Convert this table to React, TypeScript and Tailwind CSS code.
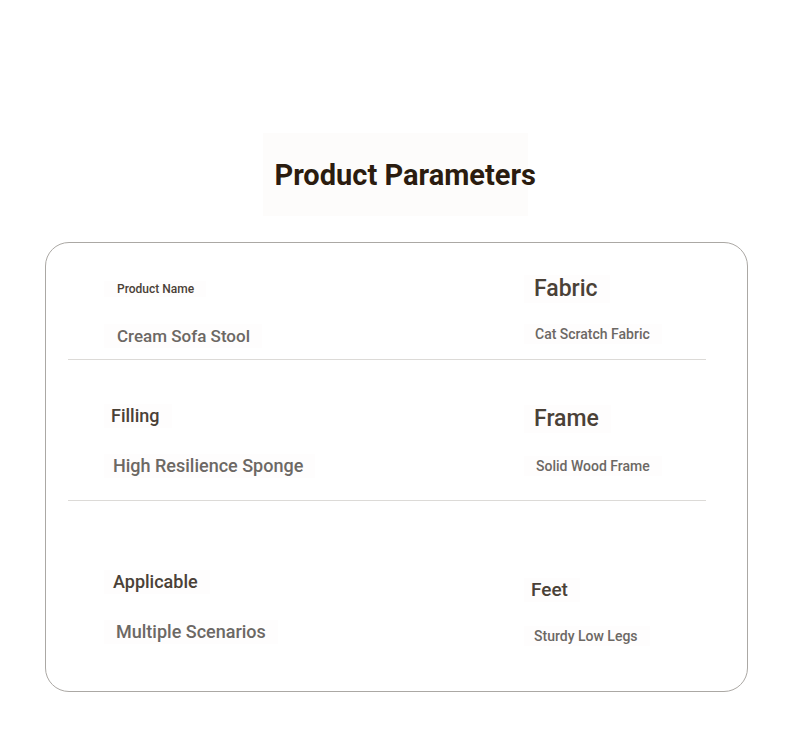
const rows = [
  {
    height: "h-[116px]",
    left: {
      label: "Product Name",
      labelCls: "mt-[38px] pl-[13px] text-[12px] leading-[16px]",
      value: "Cream Sofa Stool",
      valueCls: "mt-[27px] pl-[13px] text-[17px] leading-[24px]",
    },
    right: {
      label: "Fabric",
      labelCls: "mt-[32px] pl-[10px] text-[23px] leading-[28px]",
      value: "Cat Scratch Fabric",
      valueCls: "mt-[21px] pl-[11px] text-[14px] leading-[20px]",
    },
  },
  {
    height: "h-[140px]",
    left: {
      label: "Filling",
      labelCls: "mt-[44px] pl-[7px] text-[18px] leading-[24px]",
      value: "High Resilience Sponge",
      valueCls: "mt-[26px] pl-[9px] text-[18px] leading-[24px]",
    },
    right: {
      label: "Frame",
      labelCls: "mt-[45px] pl-[10px] text-[23px] leading-[28px]",
      value: "Solid Wood Frame",
      valueCls: "mt-[23px] pl-[12px] text-[14px] leading-[20px]",
    },
  },
  {
    height: "h-[189px]",
    left: {
      label: "Applicable",
      labelCls: "mt-[69px] pl-[9px] text-[18px] leading-[24px]",
      value: "Multiple Scenarios",
      valueCls: "mt-[26px] pl-[12px] text-[18px] leading-[24px]",
    },
    right: {
      label: "Feet",
      labelCls: "mt-[77px] pl-[7px] text-[19px] leading-[24px]",
      value: "Sturdy Low Legs",
      valueCls: "mt-[24px] pl-[10px] text-[14px] leading-[20px]",
    },
  },
];

const Cell = ({ item }: { item: any }) => (
  <div className="flex flex-col items-start">
    <div className={`${item.labelCls} font-medium text-[#4a4137] bg-[#fefdfd] pr-3`}>{item.label}</div>
    <div className={`${item.valueCls} font-medium text-[#6c6864] bg-[#fefdfd] pr-3 whitespace-nowrap`}>{item.value}</div>
  </div>
);

export default function App() {
  return (
    <div className="w-[790px] h-[741px] bg-white font-['Roboto',sans-serif]">
      <div className="flex justify-center pt-[133px]">
        <div className="w-[265px] h-[83px] pt-[24px] pl-[12px] bg-[#fdfcfb]">
          <h1 className="text-[29px] leading-[36px] font-bold text-[#2b1c0f] whitespace-nowrap">
            Product Parameters
          </h1>
        </div>
      </div>
      <div className="ml-[45px] mt-[26px] w-[703px] h-[450px] border border-[#aba8a4] rounded-[24px] pl-[22px] pr-[41px]">
        {rows.map((row, i) => (
          <div key={i}>
            <div className={`${row.height} grid grid-cols-[420px_1fr] pl-[36px]`}>
              <Cell item={row.left} />
              <Cell item={row.right} />
            </div>
            {i < rows.length - 1 && <div className="h-px bg-[#dcdad7]" />}
          </div>
        ))}
      </div>
    </div>
  );
}
